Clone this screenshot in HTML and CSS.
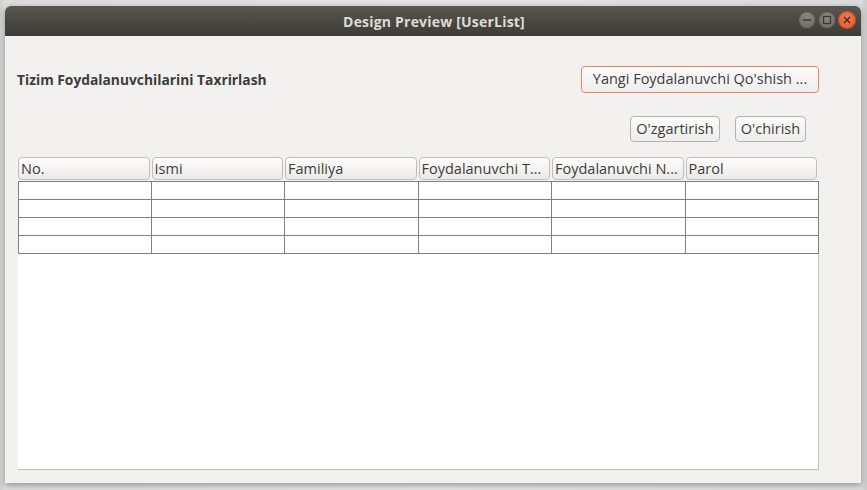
FILE: index.html
```html
<!DOCTYPE html>
<html>
<head>
<meta charset="utf-8">
<link rel="stylesheet" href="styles.css">
</head>
<body>
<div class="desk">
  <div class="window">
    <div class="titlebar">
      <span class="title">Design Preview [UserList]</span>
      <div class="controls">
        <span class="wbtn"><svg width="18" height="18" viewBox="0 0 18 18"><path d="M5 9h8" stroke="#3a3935" stroke-width="1.3"/></svg></span>
        <span class="wbtn"><svg width="18" height="18" viewBox="0 0 18 18"><rect x="5.5" y="5.5" width="7" height="7" fill="none" stroke="#3a3935" stroke-width="1.2"/></svg></span>
        <span class="wbtn close"><svg width="18" height="18" viewBox="0 0 18 18"><path d="M6 6l6 6M12 6l-6 6" stroke="#3a2a22" stroke-width="1.4"/></svg></span>
      </div>
    </div>
    <div class="content">
      <div class="toprow">
        <h1 class="heading">Tizim Foydalanuvchilarini Taxrirlash</h1>
        <button class="btn primary">Yangi Foydalanuvchi Qo'shish ...</button>
      </div>
      <div class="actions">
        <button class="btn">O'zgartirish</button>
        <button class="btn">O'chirish</button>
      </div>
      <div class="table">
        <div class="thead">
          <div class="th">No.</div>
          <div class="th">Ismi</div>
          <div class="th">Familiya</div>
          <div class="th">Foydalanuvchi T...</div>
          <div class="th">Foydalanuvchi N...</div>
          <div class="th">Parol</div>
        </div>
        <div class="tbody">
          <div class="grid">
            <div></div><div></div><div></div><div></div><div></div><div></div>
            <div></div><div></div><div></div><div></div><div></div><div></div>
            <div></div><div></div><div></div><div></div><div></div><div></div>
            <div></div><div></div><div></div><div></div><div></div><div></div>
          </div>
        </div>
      </div>
    </div>
  </div>
</div>
</body>
</html>
```
FILE: styles.css
```css
html, body {
  margin: 0;
  padding: 0;
}
body {
  width: 867px;
  height: 490px;
  overflow: hidden;
  background: #d9d9d9;
  font-family: "Open Sans", "DejaVu Sans", sans-serif;
}
.desk {
  height: 490px;
  box-sizing: border-box;
  padding: 6px 6px 7px 5px;
  background: linear-gradient(to right, #cfcfcf 0, #dcdcdc 5px, #e4e4e4 50%, #dcdcdc calc(100% - 6px), #c9c9c9 100%);
}
.window {
  height: 477px;
  display: flex;
  flex-direction: column;
  background: #f2f1ef;
  border-radius: 6px 6px 0 0;
  box-shadow: 0 2px 6px rgba(0,0,0,0.35);
  overflow: hidden;
}
.titlebar {
  height: 30px;
  flex: none;
  position: relative;
  display: flex;
  align-items: center;
  justify-content: center;
  background: linear-gradient(to bottom, #5b5850 0, #4a4843 50%, #3e3c37 100%);
}
.title {
  color: #dfdbd2;
  font-family: "Open Sans", "DejaVu Sans", sans-serif;
  font-weight: 700;
  font-size: 14px;
  letter-spacing: 0.2px;
  margin-left: 2px;
}
.controls {
  position: absolute;
  right: 5px;
  top: 5px;
  display: flex;
  gap: 2px;
}
.wbtn {
  width: 18px;
  height: 18px;
  border-radius: 50%;
  background: radial-gradient(circle at 50% 35%, #8a8781, #666460);
  box-shadow: inset 0 0 0 1px #45433e;
  display: flex;
}
.wbtn.close {
  background: radial-gradient(circle at 50% 35%, #f27a4c, #e0552a);
  box-shadow: inset 0 0 0 1px #b9461f;
}
.content {
  flex: 1;
  display: flex;
  flex-direction: column;
  padding: 30px 42px 13px 12px;
  min-height: 0;
}
.toprow {
  display: flex;
  align-items: center;
  justify-content: space-between;
  height: 26px;
}
.heading {
  margin: 0;
  font-size: 13.8px;
  font-weight: 700;
  color: #3c3c3c;
  padding-top: 1px;
}
.btn {
  font-family: "Open Sans", "DejaVu Sans", sans-serif;
  font-size: 14.5px;
  color: #3c3c3c;
  background: linear-gradient(to bottom, #fbfbfa, #eeedeb);
  border: 1px solid #b6b2ac;
  border-radius: 4px;
  padding: 0 6px;
  height: 26px;
  line-height: 22px;
}
.btn.primary {
  border-color: #e9845e;
  height: 27px;
  width: 238px;
  padding: 0;
}
.actions {
  display: flex;
  justify-content: flex-end;
  gap: 15px;
  margin-top: 24px;
  padding-right: 13px;
}
.actions .btn:first-child { width: 90px; padding: 0; }
.actions .btn:last-child { width: 71px; padding: 0; }
.table {
  flex: 1;
  display: flex;
  flex-direction: column;
  margin-top: 15px;
  margin-left: 1px;
  min-height: 0;
}
.thead {
  display: grid;
  grid-template-columns: repeat(6, 1fr);
  column-gap: 2px;
  height: 23px;
  padding-right: 2px;
}
.th {
  border: 1px solid #c2beb8;
  border-radius: 4px;
  background: linear-gradient(to bottom, #fdfdfc, #eceae7);
  font-size: 14.5px;
  color: #3c3c3c;
  line-height: 21px;
  padding-left: 2px;
  white-space: nowrap;
  overflow: hidden;
}
.tbody {
  flex: 1;
  margin-top: 1px;
  background: #fff;
  border: 1px solid #c3c1bd;
  border-top: none;
  border-left: none;
}
.grid {
  display: grid;
  grid-template-columns: 133px 133px 134px 133px 134px 133px;
  grid-auto-rows: 18px;
  border-top: 1px solid #808080;
  border-left: 1px solid #808080;
  width: max-content;
}
.grid div {
  border-right: 1px solid #808080;
  border-bottom: 1px solid #808080;
}
```
